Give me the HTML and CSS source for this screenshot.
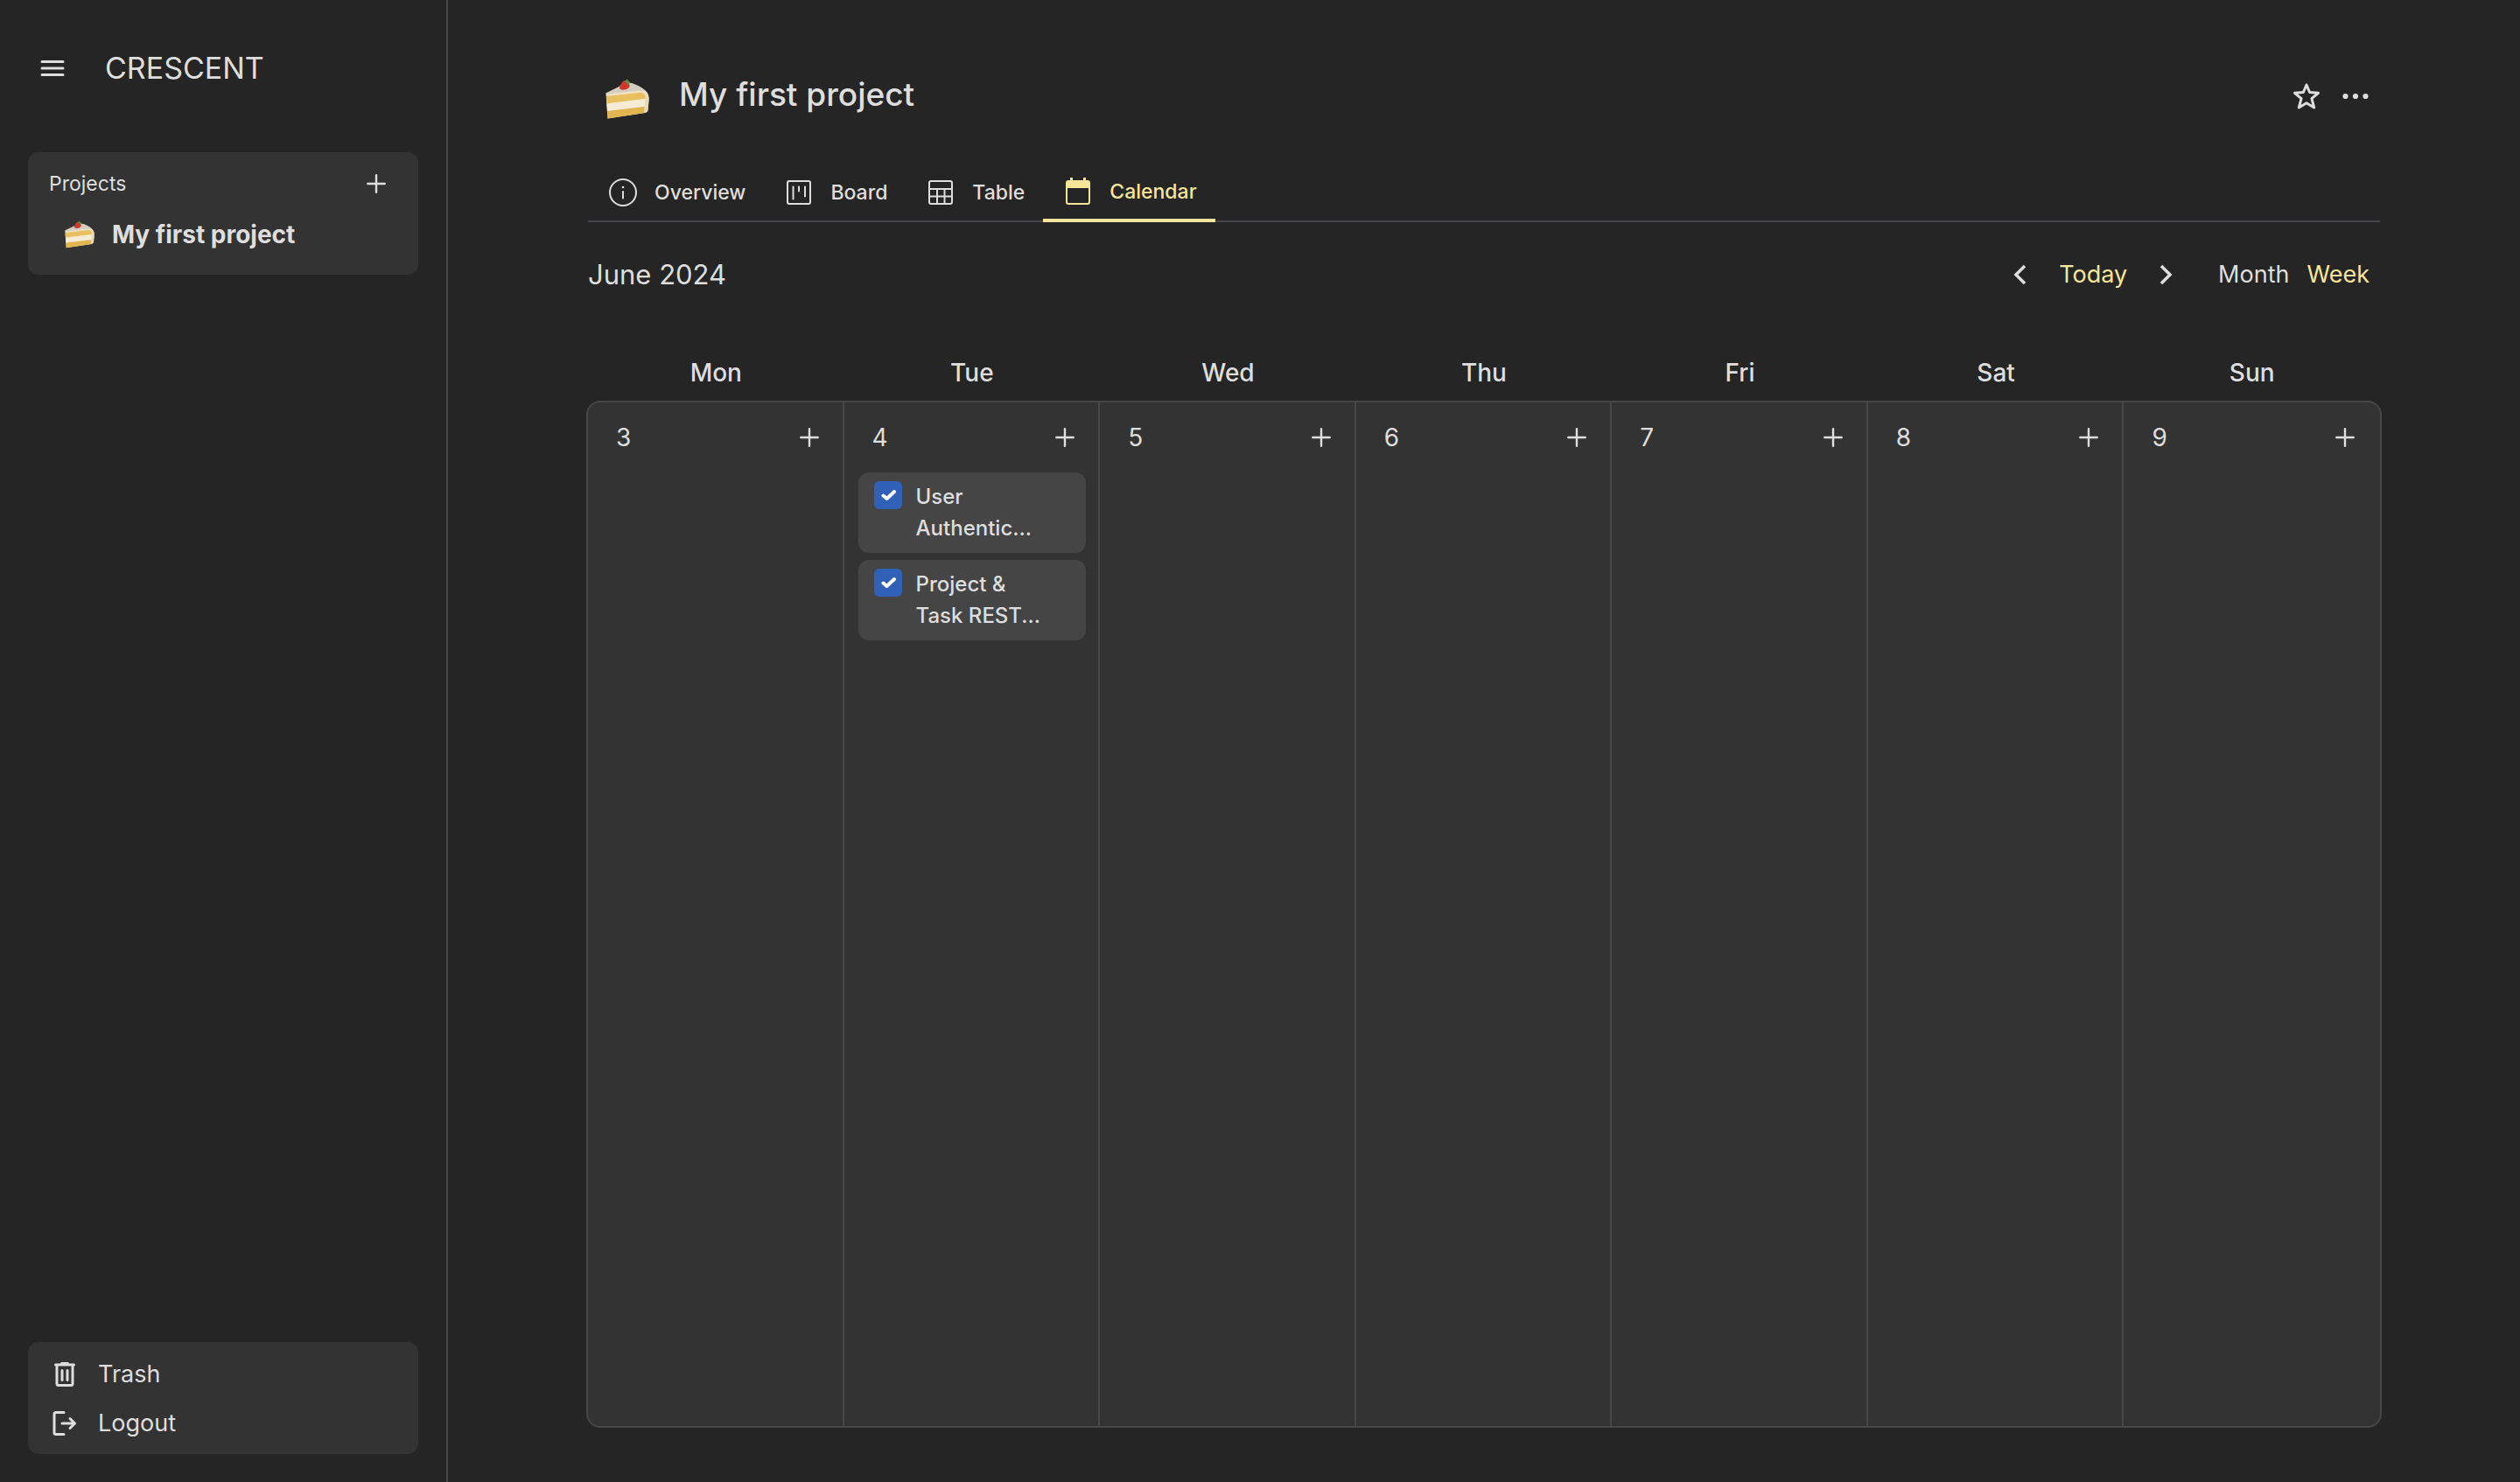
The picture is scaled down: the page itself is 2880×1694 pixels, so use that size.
FILE: index.html
```html
<!DOCTYPE html>
<html lang="en">
<head>
<meta charset="utf-8">
<title>Crescent – My first project</title>
<link rel="stylesheet" href="styles.css">
</head>
<body>
<svg class="sprite" aria-hidden="true">
  <symbol id="plus" viewBox="0 0 24 24"><path d="M12 2.300v19.400M2.300 12h19.400" stroke="currentColor" stroke-width="2.400" stroke-linecap="round"/></symbol>
  <symbol id="cake" viewBox="0 0 50 46">
    <path d="M.5 16.500 22 6Q26 4 31 5.500 43 10 47 15 50 18 49.500 25L48.500 36Q48 38.500 45 39L2.500 45.500Z" fill="#efe1c4"/>
    <path d="M.5 16.500 22 6Q26 4 31 5.500 43 10 46 14.500L38 13.500.5 17.800Z" fill="#d3cdbf"/>
    <path d="M1 20 40 15.800Q45 15.800 45.500 20V23L1.400 28.500Z" fill="#e8c060"/>
    <path d="M1.400 28.500 45.500 23V31.800L2 37Z" fill="#f6ecd6"/>
    <path d="M2 37 45.500 31.800 45 39 2.500 45.500Z" fill="#e2b551"/>
    <path d="M45.500 20Q46 17 48 18 50 20 49.500 25L48.500 36Q48 38.500 44 39Z" fill="#e8d9b8"/>
    <path d="M21 2.500Q16.500 5 16 11 17 13 21 12.600 26 12 27.500 9 27.500 4 21 2.500Z" fill="#d2342b"/>
    <path d="M20.500 2.500 23.500 2 24.500 0 25.500 2 28.500 4 27 5.500 28 8 25 6.500 23.500 4Z" fill="#6a8a45"/>
  </symbol>
</svg>
<div class="app">
  <aside class="sidebar">
    <header class="brand">
      <button class="icon-button" aria-label="Toggle menu">
        <svg width="28" height="20" viewBox="0 0 28 20"><path d="M2 2.500h24M2 10h24M2 17.500h24" stroke="currentColor" stroke-width="3" stroke-linecap="round"/></svg>
      </button>
      <span class="brand-name">CRESCENT</span>
    </header>
    <section class="panel projects">
      <div class="projects-head">
        <h2 class="projects-title">Projects</h2>
        <button class="icon-button" aria-label="Add project"><svg width="24" height="24"><use href="#plus"/></svg></button>
      </div>
      <a class="project-link" href="#"><svg width="34" height="32"><use href="#cake"/></svg>My first project</a>
    </section>
    <nav class="panel tools">
      <a class="tool-link" href="#">
        <svg width="28" height="30" viewBox="0 0 28 30" fill="none" stroke="currentColor" stroke-width="3" stroke-linecap="round" stroke-linejoin="round"><path d="M3.500 4h21M10.500 2.500h7M5 5v20.500q0 2 2 2h14q2 0 2-2V5M11 10.500v11M17 10.500v11"/></svg>Trash
      </a>
      <a class="tool-link" href="#">
        <svg width="28" height="30" viewBox="0 0 28 30" fill="none" stroke="currentColor" stroke-width="3" stroke-linecap="round" stroke-linejoin="round"><path d="M13 2.500H4q-2 0-2 2v21q0 2 2 2h9M11 15h14M20 9.500 25.500 15 20 20.500"/></svg>Logout
      </a>
    </nav>
  </aside>
  <main class="main">
    <header class="project-header">
      <svg class="project-icon" width="50" height="46"><use href="#cake"/></svg>
      <h1 class="project-name">My first project</h1>
      <div class="project-actions">
        <button class="icon-button" aria-label="Favourite"><svg width="32" height="32" viewBox="0 0 32 32" fill="none" stroke="currentColor" stroke-width="3" stroke-linejoin="round"><path d="M16 3 19.600 11.500 29.500 12.300 21.900 18.700 24.700 29 16 23.700 7.300 29 10.100 18.700 2.500 12.300 12.400 11.500Z"/></svg></button>
        <button class="icon-button" aria-label="More"><svg width="32" height="32" viewBox="0 0 32 32" fill="currentColor"><circle cx="4.500" cy="16" r="3.100"/><circle cx="16" cy="16" r="3.100"/><circle cx="27.500" cy="16" r="3.100"/></svg></button>
      </div>
    </header>
    <nav class="tabs">
      <a class="tab" href="#"><svg width="32" height="32" viewBox="0 0 32 32" fill="none" stroke="currentColor" stroke-width="2" stroke-linecap="round"><circle cx="16" cy="16" r="15"/><path d="M16 15v7.500"/><circle cx="16" cy="10" r="1.300" fill="currentColor" stroke="none"/></svg>Overview</a>
      <a class="tab" href="#"><svg width="32" height="32" viewBox="-2 0 32 32" fill="none" stroke="currentColor" stroke-width="2" stroke-linecap="round"><rect x="1" y="3" width="26" height="26" rx="2"/><path d="M7.500 9.500v14M14 9.500v5M21 9.500v11"/></svg>Board</a>
      <a class="tab" href="#"><svg width="32" height="32" viewBox="-2 0 32 32" fill="none" stroke="currentColor" stroke-width="2"><rect x="1" y="3" width="26" height="26" rx="2"/><path d="M1 12h26M1 20.500h26M10 12v17M18.500 12v17"/></svg>Table</a>
      <a class="tab tab-active" href="#" aria-current="page"><svg width="32" height="32" viewBox="-2 0 32 32" fill="none" stroke="currentColor" stroke-width="2"><rect x="1" y="4" width="26" height="26" rx="2"/><path d="M1 4h26v8H1Z" fill="currentColor" stroke="none"/><path d="M6.500-.5v5M21.500-.5v5" stroke-width="3"/></svg>Calendar</a>
    </nav>
    <div class="toolbar">
      <h2 class="period">June 2024</h2>
      <div class="pager">
        <button class="icon-button" aria-label="Previous week"><svg width="20" height="24" viewBox="0 0 20 24" fill="none" stroke="currentColor" stroke-width="3.500"><path d="M15 2 5 12 15 22"/></svg></button>
        <button class="text-button accent">Today</button>
        <button class="icon-button" aria-label="Next week"><svg width="20" height="24" viewBox="0 0 20 24" fill="none" stroke="currentColor" stroke-width="3.500"><path d="M5 2 15 12 5 22"/></svg></button>
      </div>
      <div class="views">
        <button class="text-button">Month</button>
        <button class="text-button accent">Week</button>
      </div>
    </div>
    <div class="weekdays"><span>Mon</span><span>Tue</span><span>Wed</span><span>Thu</span><span>Fri</span><span>Sat</span><span>Sun</span></div>
    <div class="week">
      <section class="day"><div class="day-head"><span>3</span><button class="icon-button" aria-label="Add task on 3"><svg width="24" height="24"><use href="#plus"/></svg></button></div></section>
      <section class="day"><div class="day-head"><span>4</span><button class="icon-button" aria-label="Add task on 4"><svg width="24" height="24"><use href="#plus"/></svg></button></div>
        <div class="tasks">
          <label class="task"><input class="check" type="checkbox" checked><span class="task-name">User<br>Authentic...</span></label>
          <label class="task"><input class="check" type="checkbox" checked><span class="task-name">Project &amp;<br>Task REST...</span></label>
        </div>
      </section>
      <section class="day"><div class="day-head"><span>5</span><button class="icon-button" aria-label="Add task on 5"><svg width="24" height="24"><use href="#plus"/></svg></button></div></section>
      <section class="day"><div class="day-head"><span>6</span><button class="icon-button" aria-label="Add task on 6"><svg width="24" height="24"><use href="#plus"/></svg></button></div></section>
      <section class="day"><div class="day-head"><span>7</span><button class="icon-button" aria-label="Add task on 7"><svg width="24" height="24"><use href="#plus"/></svg></button></div></section>
      <section class="day"><div class="day-head"><span>8</span><button class="icon-button" aria-label="Add task on 8"><svg width="24" height="24"><use href="#plus"/></svg></button></div></section>
      <section class="day"><div class="day-head"><span>9</span><button class="icon-button" aria-label="Add task on 9"><svg width="24" height="24"><use href="#plus"/></svg></button></div></section>
    </div>
  </main>
</div>
</body>
</html>
```
FILE: styles.css
```css
:root {
  --bg: #252525;
  --panel: #333333;
  --card: #454545;
  --line: #474747;
  --text: #dedede;
  --accent: #f9e59a;
}

* { box-sizing: border-box; }

body {
  margin: 0;
  background: var(--bg);
  color: var(--text);
  font: 400 28px/40px Inter, "Liberation Sans", sans-serif;
}

h1, h2 { margin: 0; font-weight: 400; }
a { color: inherit; text-decoration: none; }
svg { display: block; flex: none; }
.sprite { display: none; }

button {
  padding: 0;
  border: 0;
  background: none;
  color: inherit;
  font: inherit;
  cursor: pointer;
}

.app { display: flex; min-height: 100vh; }

.sidebar {
  display: flex;
  flex-direction: column;
  flex: none;
  width: 512px;
  padding: 54px 32px 32px;
  border-right: 2px solid var(--line);
}

.brand {
  display: flex;
  align-items: center;
  gap: 46px;
  height: 48px;
  padding-left: 14px;
  margin-bottom: 72px;
}

.brand-name { font-size: 34px; line-height: 48px; }

.panel { border-radius: 12px; background: var(--panel); }

.projects { height: 140px; padding: 16px 36px 0 24px; }

.projects-head {
  display: flex;
  align-items: center;
  justify-content: space-between;
  height: 40px;
}

.projects-title { font-size: 23px; line-height: 40px; }

.project-link {
  display: flex;
  align-items: center;
  gap: 20px;
  height: 56px;
  margin-top: 10px;
  padding-left: 18px;
  font-weight: 700;
}

.tools { margin-top: auto; padding: 9px 28px 7px; }

.tool-link {
  display: flex;
  align-items: center;
  gap: 24px;
  height: 56px;
}

.tool-link, .text-button { font-size: 27px; }

.main {
  display: flex;
  flex-direction: column;
  flex: 1;
  min-width: 0;
  padding: 80px 160px 62px;
}

.project-header {
  display: flex;
  align-items: center;
  gap: 34px;
  height: 56px;
  padding: 0 12px 0 20px;
}

.project-icon { align-self: flex-end; }

.project-name { font-size: 37px; line-height: 56px; font-weight: 500; }

.project-actions { display: flex; gap: 24px; margin-left: auto; padding-top: 4px; }

.tabs {
  display: flex;
  align-items: stretch;
  height: 66px;
  margin-top: 52px;
  border-bottom: 2px solid #454549;
}

.tab {
  display: flex;
  align-items: center;
  gap: 20px;
  padding: 0 21px 0 24px;
  font-size: 23px;
  font-weight: 500;
}

.tab-active {
  margin-bottom: -2px;
  border-bottom: 4px solid var(--accent);
  color: var(--accent);
}

.accent { color: var(--accent); }

.toolbar {
  display: flex;
  align-items: center;
  height: 40px;
  margin-top: 40px;
  padding-right: 12px;
}

.period { font-size: 31px; line-height: 40px; }

.pager { display: flex; align-items: center; gap: 34px; margin-left: auto; }

.views { display: flex; gap: 20px; margin-left: 50px; }

.weekdays {
  display: grid;
  grid-template-columns: repeat(7, 1fr);
  margin: 72px 0 12px;
  font-weight: 500;
  text-align: center;
}

.week {
  display: grid;
  grid-template-columns: repeat(7, 1fr);
  flex: 1;
  margin: 0 -2px;
  border: 2px solid var(--line);
  border-radius: 16px;
  background: var(--panel);
}

.day { min-width: 0; padding: 20px 14px 20px 16px; border-right: 2px solid var(--line); }
.day:last-child { padding-right: 16px; border-right: 0; }

.day-head {
  display: flex;
  align-items: center;
  justify-content: space-between;
  height: 40px;
  padding: 0 12px 0 16px;
}

.tasks { display: flex; flex-direction: column; gap: 8px; margin-top: 20px; }

.task {
  display: flex;
  gap: 16px;
  height: 92px;
  padding: 10px 18px;
  border-radius: 12px;
  background: var(--card);
}

.check {
  appearance: none;
  flex: none;
  width: 32px;
  height: 32px;
  margin: 0;
  border-radius: 6px;
  background: #3060b8 url("data:image/svg+xml,%3Csvg xmlns='http://www.w3.org/2000/svg' viewBox='0 0 32 32' fill='none' stroke='white' stroke-width='4' stroke-linecap='round' stroke-linejoin='round'%3E%3Cpath d='M10.500 16.500 14.500 20 23 12'/%3E%3C/svg%3E");
}

.task-name { font-size: 24px; line-height: 36px; font-weight: 500; }
```
